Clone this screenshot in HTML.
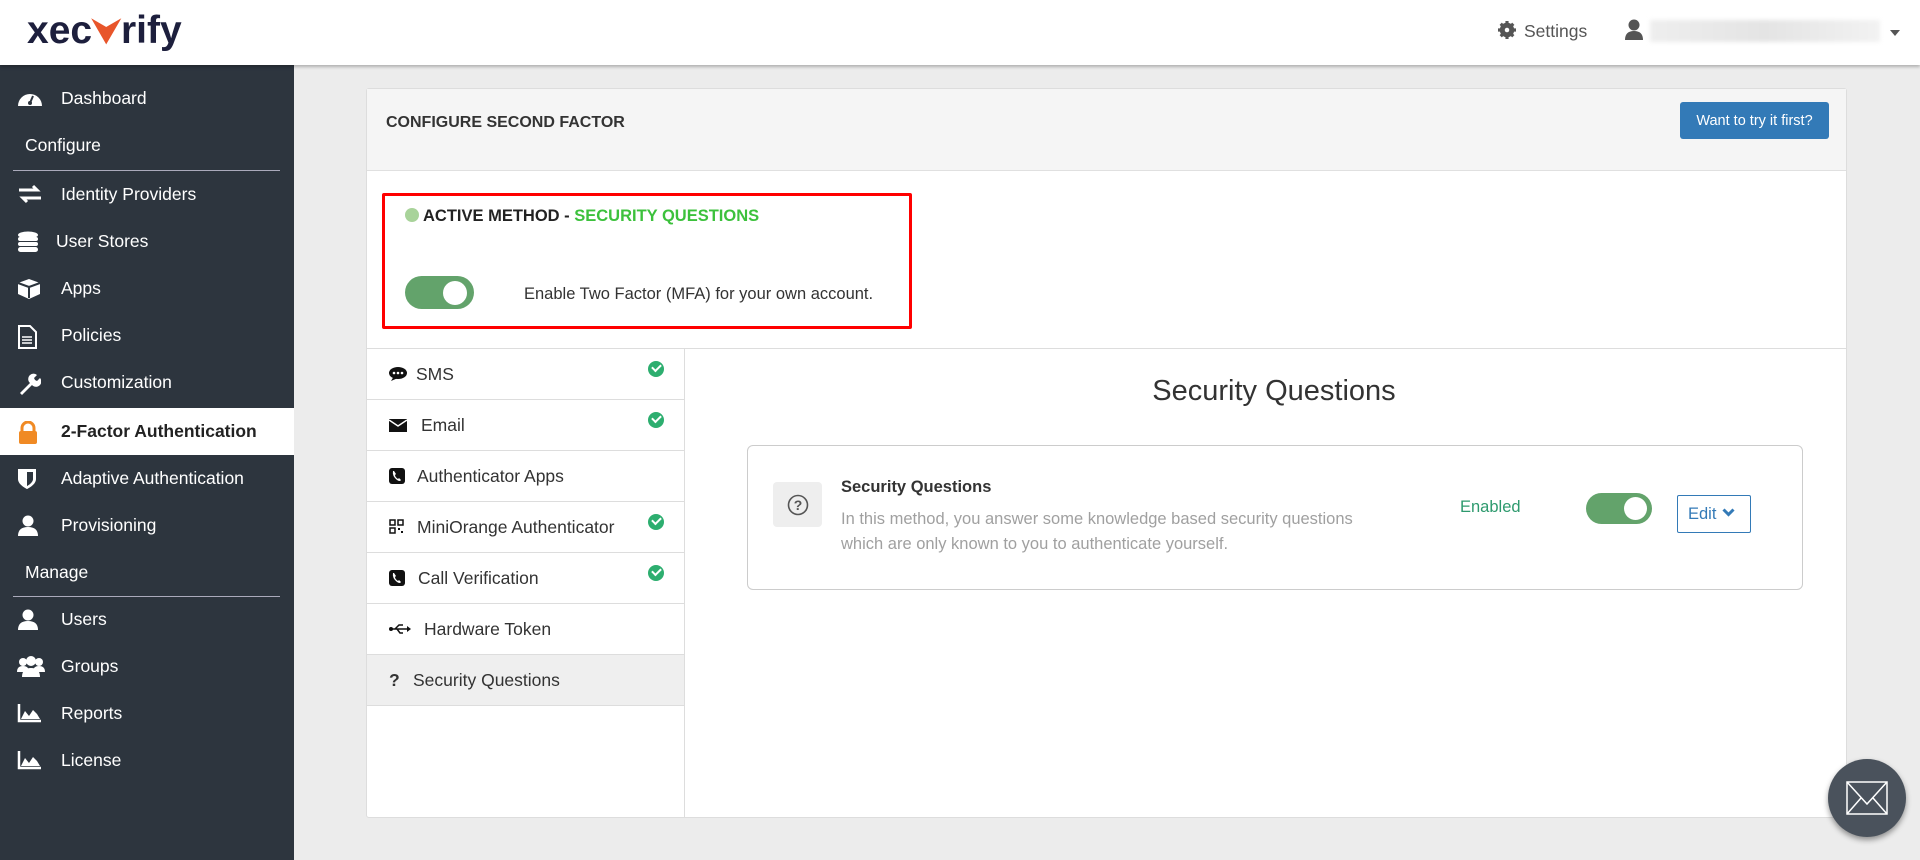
<!DOCTYPE html>
<html><head><meta charset="utf-8"><style>
*{box-sizing:border-box;margin:0;padding:0}
body{width:1920px;height:860px;overflow:hidden;background:#ececec;font-family:"Liberation Sans",Arial,sans-serif;position:relative;color:#333}
.hdr{position:absolute;left:0;top:0;width:1920px;height:65px;background:#fff;box-shadow:0 2px 3px rgba(0,0,0,.25);z-index:2}
.logo{position:absolute;left:27px;top:9px;font-size:39px;font-weight:bold;color:#1d1f3d;letter-spacing:0px}
.side{position:absolute;left:0;top:65px;width:294px;height:795px;background:#2d353e}
.it{position:absolute;left:0;width:294px;height:47px;color:#fff;font-size:17.5px;line-height:47px}
.it svg{position:absolute;left:17px;top:13px}
.it span{position:absolute;left:61px}
.sec{position:absolute;left:25px;color:#fff;font-size:17.5px}
.ln{position:absolute;left:13px;width:267px;height:1px;background:#aab}
.card{position:absolute;left:366px;top:88px;width:1481px;height:730px;background:#fff;border:1px solid #ddd;border-radius:3px}
.ch{position:absolute;left:0;top:0;width:100%;height:82px;background:#f5f5f5;border-bottom:1px solid #e0e0e0}
.row{position:absolute;left:0;width:317px;height:51px;border-bottom:1px solid #ddd;font-size:17.5px;line-height:51px}
.row .ic{position:absolute;left:22px;top:0}
.row .tx{position:absolute}
.chk{position:absolute;left:281px;top:12px;width:16px;height:16px;border-radius:50%;background:#2dae6f}
.chk:after{content:"";position:absolute;left:4px;top:3px;width:7px;height:4px;border-left:2.5px solid #fff;border-bottom:2.5px solid #fff;transform:rotate(-45deg)}
.tog{position:absolute;background:#63a36b;border-radius:20px}
.tog i{position:absolute;background:#fff;border-radius:50%}
</style></head><body>
<div class="hdr">
 <div class="logo">xec<span style="color:#e8552a;font-size:34px">&#x2B9F;</span>rify</div>
 <svg style="position:absolute;left:1498px;top:21px" width="18" height="18" viewBox="0 0 20 20"><circle cx="10" cy="10" r="6" fill="none" stroke="#555" stroke-width="4"/><g stroke="#555" stroke-width="3.5"><line x1="10" y1="0" x2="10" y2="20"/><line x1="0" y1="10" x2="20" y2="10"/><line x1="3" y1="3" x2="17" y2="17"/><line x1="17" y1="3" x2="3" y2="17"/></g><circle cx="10" cy="10" r="2.5" fill="#fff"/></svg>
 <div style="position:absolute;left:1524px;top:21px;font-size:17.5px;color:#555">Settings</div>
 <svg style="position:absolute;left:1624px;top:19px" width="20" height="22" viewBox="0 0 20 22"><circle cx="10" cy="6" r="5.5" fill="#555"/><path d="M1 21 Q1 12 10 12 Q19 12 19 21Z" fill="#555"/></svg>
 <div style="position:absolute;left:1650px;top:20px;width:230px;height:22px;background:linear-gradient(90deg,#eee,#e4e4e4,#f2f2f2);filter:blur(2px)"></div>
 <div style="position:absolute;left:1890px;top:30px;border:5px solid transparent;border-top:6px solid #555"></div>
</div>
<div class="side">
 <div class="it" style="top:10px"><svg width="26" height="20" viewBox="0 0 26 20"><path d="M1 18 A12 12 0 0 1 25 18Z" fill="#fff"/><circle cx="13" cy="15" r="2" fill="#2d353e"/><line x1="13" y1="15" x2="16" y2="8" stroke="#2d353e" stroke-width="2"/></svg><span>Dashboard</span></div>
 <div class="sec" style="top:70px">Configure</div>
 <div class="ln" style="top:105px"></div>
 <div class="it" style="top:106px"><svg width="26" height="20" viewBox="0 0 26 20"><path d="M2 6h18l-4-4M24 14H6l4 4" stroke="#fff" stroke-width="3" fill="none"/></svg><span>Identity Providers</span></div>
 <div class="it" style="top:153px"><svg width="22" height="22" viewBox="0 0 22 22"><ellipse cx="11" cy="4" rx="10" ry="3.5" fill="#fff"/><rect x="1" y="6" width="20" height="4" rx="2" fill="#fff"/><rect x="1" y="11" width="20" height="4" rx="2" fill="#fff"/><rect x="1" y="16" width="20" height="5" rx="2.5" fill="#fff"/></svg><span style="left:56px">User Stores</span></div>
 <div class="it" style="top:200px"><svg width="24" height="22" viewBox="0 0 24 22"><path d="M12 1L23 5v11l-11 5-11-5V5z" fill="#fff"/><path d="M12 9v11M1 5l11 4 11-4" stroke="#2d353e" stroke-width="2" fill="none"/></svg><span>Apps</span></div>
 <div class="it" style="top:247px"><svg width="20" height="24" viewBox="0 0 20 24"><path d="M2 1h11l6 6v16H2z" fill="none" stroke="#fff" stroke-width="2"/><path d="M5 12h10M5 15h10M5 18h10" stroke="#fff" stroke-width="1.5"/></svg><span>Policies</span></div>
 <div class="it" style="top:294px"><svg width="24" height="24" viewBox="0 0 24 24"><path d="M3 21L13 11a5 5 0 0 1 7-8l-3 3 1 2 2 1 3-3a5 5 0 0 1-8 7L5 23z" fill="#fff"/></svg><span>Customization</span></div>
 <div class="it" style="top:343px;background:#fff;color:#222;font-weight:bold;height:47px"><svg width="22" height="24" viewBox="0 0 22 24"><path d="M5 11V7a6 6 0 0 1 12 0v4" stroke="#f08a24" stroke-width="3" fill="none"/><rect x="2" y="10" width="18" height="13" rx="2" fill="#f08a24"/></svg><span>2-Factor Authentication</span></div>
 <div class="it" style="top:390px"><svg width="20" height="22" viewBox="0 0 20 22"><path d="M1 1h18v10c0 6-9 10-9 10S1 17 1 11z" fill="#fff"/><path d="M10 4h6v7c0 4-6 7-6 7z" fill="#2d353e"/></svg><span>Adaptive Authentication</span></div>
 <div class="it" style="top:437px"><svg width="22" height="22" viewBox="0 0 22 22"><circle cx="11" cy="6" r="5.5" fill="#fff"/><path d="M1 21q0-9 10-9t10 9z" fill="#fff"/></svg><span>Provisioning</span></div>
 <div class="sec" style="top:497px">Manage</div>
 <div class="ln" style="top:531px"></div>
 <div class="it" style="top:531px"><svg width="22" height="22" viewBox="0 0 22 22"><circle cx="11" cy="6" r="5.5" fill="#fff"/><path d="M1 21q0-9 10-9t10 9z" fill="#fff"/></svg><span>Users</span></div>
 <div class="it" style="top:578px"><svg width="28" height="22" viewBox="0 0 28 22"><circle cx="6" cy="6" r="4" fill="#fff"/><circle cx="22" cy="6" r="4" fill="#fff"/><circle cx="14" cy="5" r="5" fill="#fff"/><path d="M0 16q0-6 6-6t6 6zM16 16q0-6 6-6t6 6z" fill="#fff"/><path d="M5 21q0-9 9-9t9 9z" fill="#fff"/></svg><span>Groups</span></div>
 <div class="it" style="top:625px"><svg width="26" height="20" viewBox="0 0 26 20"><path d="M2 1v17h22" stroke="#fff" stroke-width="2.5" fill="none"/><path d="M4 16l4-8 4 5 4-6 4 4 3 5z" fill="#fff"/></svg><span>Reports</span></div>
 <div class="it" style="top:672px"><svg width="26" height="20" viewBox="0 0 26 20"><path d="M2 1v17h22" stroke="#fff" stroke-width="2.5" fill="none"/><path d="M4 16l4-8 4 5 4-6 4 4 3 5z" fill="#fff"/></svg><span>License</span></div>
</div>

<div class="card">
 <div class="ch">
  <div style="position:absolute;left:19px;top:25px;font-size:16px;font-weight:bold;color:#333">CONFIGURE SECOND FACTOR</div>
  <div style="position:absolute;left:1313px;top:13px;width:149px;height:37px;background:#337ab7;border-radius:3px;color:#fff;font-size:14.5px;line-height:38px;text-align:center">Want to try it first?</div>
 </div>
 <div style="position:absolute;left:15px;top:104px;width:530px;height:136px;border:3.5px solid #f00;border-radius:2px">
  <div style="position:absolute;left:20px;top:12px;width:14px;height:14px;border-radius:50%;background:#a8d39a"></div>
  <div style="position:absolute;left:38px;top:11px;font-size:16.5px;font-weight:bold;color:#222">ACTIVE METHOD - <span style="color:#3cc13c">SECURITY QUESTIONS</span></div>
  <div class="tog" style="left:20px;top:80px;width:69px;height:33px"><i style="left:38px;top:5px;width:24px;height:24px"></i></div>
  <div style="position:absolute;left:139px;top:89px;font-size:16.5px;color:#333">Enable Two Factor (MFA) for your own account.</div>
 </div>
 <div style="position:absolute;left:0;top:259px;width:100%;height:1px;background:#ddd"></div>
 <div style="position:absolute;left:317px;top:260px;width:1px;height:469px;background:#ddd"></div>

 <div class="row" style="top:260px"><svg class="ic" style="top:17px" width="18" height="16" viewBox="0 0 18 16"><ellipse cx="9" cy="7" rx="9" ry="6" fill="#111"/><path d="M2 15l3-5 4 2z" fill="#111"/><circle cx="5" cy="7" r="1.3" fill="#fff"/><circle cx="9" cy="7" r="1.3" fill="#fff"/><circle cx="13" cy="7" r="1.3" fill="#fff"/></svg><span class="tx" style="left:49px">SMS</span><div class="chk"></div></div>
 <div class="row" style="top:311px"><svg class="ic" style="top:19px" width="18" height="13" viewBox="0 0 18 13"><rect width="18" height="13" fill="#111"/><path d="M0 1l9 6 9-6" stroke="#fff" stroke-width="1.5" fill="none"/></svg><span class="tx" style="left:54px">Email</span><div class="chk"></div></div>
 <div class="row" style="top:362px"><svg class="ic" style="top:17px" width="16" height="16" viewBox="0 0 16 16"><rect width="16" height="16" rx="3" fill="#111"/><path d="M4 3q-1 5 4 9 3 2 4 0l-2-2-1 1q-3-2-3-4l1-1-2-3z" fill="#fff"/></svg><span class="tx" style="left:50px">Authenticator Apps</span></div>
 <div class="row" style="top:413px"><svg class="ic" style="top:17px" width="15" height="15" viewBox="0 0 15 15"><g fill="none" stroke="#111" stroke-width="1.5"><rect x="1" y="1" width="5" height="5"/><rect x="9" y="1" width="5" height="5"/><rect x="1" y="9" width="5" height="5"/></g><rect x="9" y="9" width="2" height="2" fill="#111"/><rect x="12" y="12" width="2" height="2" fill="#111"/></svg><span class="tx" style="left:50px">MiniOrange Authenticator</span><div class="chk"></div></div>
 <div class="row" style="top:464px"><svg class="ic" style="top:17px" width="16" height="16" viewBox="0 0 16 16"><rect width="16" height="16" rx="3" fill="#111"/><path d="M4 3q-1 5 4 9 3 2 4 0l-2-2-1 1q-3-2-3-4l1-1-2-3z" fill="#fff"/></svg><span class="tx" style="left:51px">Call Verification</span><div class="chk"></div></div>
 <div class="row" style="top:515px"><svg class="ic" style="top:19px" width="22" height="12" viewBox="0 0 22 12"><circle cx="2" cy="6" r="2" fill="#111"/><path d="M2 6h18M6 6l4-4h4M8 6l3 4h3" stroke="#111" stroke-width="1.5" fill="none"/><path d="M18 3l4 3-4 3z" fill="#111"/></svg><span class="tx" style="left:57px">Hardware Token</span></div>
 <div class="row" style="top:566px;background:#efefef"><span class="tx" style="left:22px;font-weight:bold">?</span><span class="tx" style="left:46px">Security Questions</span></div>

 <div style="position:absolute;left:326px;top:286px;width:1162px;text-align:center;font-size:29px;color:#333">Security Questions</div>
 <div style="position:absolute;left:380px;top:356px;width:1056px;height:145px;border:1px solid #ccc;border-radius:6px">
  <div style="position:absolute;left:25px;top:36px;width:49px;height:45px;background:#eee;border-radius:4px"><svg style="position:absolute;left:14px;top:12px" width="22" height="22" viewBox="0 0 22 22"><circle cx="11" cy="11" r="9.5" fill="none" stroke="#555" stroke-width="1.6"/><text x="11" y="16" text-anchor="middle" font-size="14" font-weight="bold" fill="#555" font-family="Liberation Sans">?</text></svg></div>
  <div style="position:absolute;left:93px;top:32px;font-size:16.5px;font-weight:bold;color:#333">Security Questions</div>
  <div style="position:absolute;left:93px;top:61px;font-size:16.5px;color:#a0a0a0;line-height:25px">In this method, you answer some knowledge based security questions<br>which are only known to you to authenticate yourself.</div>
  <div style="position:absolute;left:712px;top:52px;font-size:16.5px;color:#2e9a6e">Enabled</div>
  <div class="tog" style="left:838px;top:47px;width:66px;height:31px"><i style="left:38px;top:4px;width:23px;height:23px"></i></div>
  <div style="position:absolute;left:929px;top:49px;width:74px;height:38px;border:1px solid #337ab7;border-radius:2px;color:#337ab7;font-size:16.5px;line-height:36px;padding-left:10px">Edit <svg width="13" height="10" viewBox="0 0 13 10" style="position:absolute;left:44px;top:12px"><path d="M1.5 1.5l5 5 5-5" stroke="#337ab7" stroke-width="3" fill="none"/></svg></div>
 </div>
</div>

<div style="position:absolute;left:1828px;top:759px;width:78px;height:78px;border-radius:50%;background:#4a525c;box-shadow:0 3px 6px rgba(0,0,0,.4)"><svg style="position:absolute;left:18px;top:22px" width="42" height="34" viewBox="0 0 42 34"><rect x="1" y="1" width="40" height="32" fill="none" stroke="#fff" stroke-width="1.5"/><path d="M1 1l20 22 20-22M1 33l14-16M41 33L27 17" stroke="#fff" stroke-width="1.5" fill="none"/></svg></div>
</body></html>
